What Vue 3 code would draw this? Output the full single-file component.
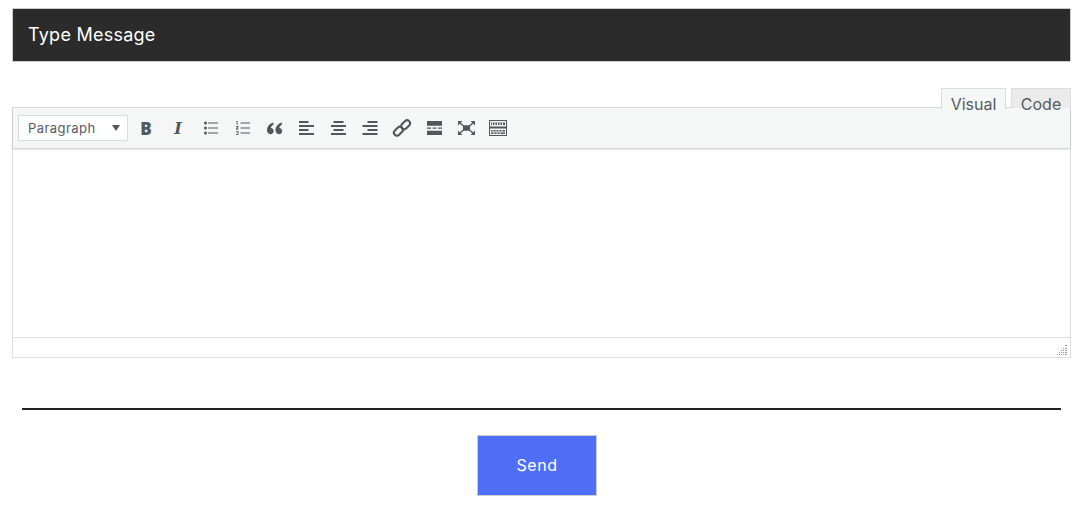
<script setup>
const tabs = [
  { label: "Visual", active: true },
  { label: "Code", active: false },
];
</script>

<template>
  <div class="page">
    <div class="title-bar"><span>Type Message</span></div>

    <div class="tabs">
      <div v-for="tab in tabs" :key="tab.label" class="tab" :class="{ active: tab.active }">{{ tab.label }}</div>
    </div>

    <div class="editor">
      <div class="toolbar">
        <div class="format">
          <span>Paragraph</span>
          <i class="caret"></i>
        </div>
        <div class="tools">
          <!-- bold -->
          <div class="tool"><span class="bold">B</span></div>
          <!-- italic -->
          <div class="tool"><span class="italic">I</span></div>
          <!-- bullet list -->
          <div class="tool">
            <svg viewBox="0 0 20 20">
              <circle cx="5.500" cy="5" r="1.500" /><circle cx="5.500" cy="10" r="1.500" /><circle cx="5.500" cy="15" r="1.500" />
              <path d="M8 4.500h10v1H8zM8 9.500h10v1H8zM8 14.500h10v1H8z" />
            </svg>
          </div>
          <!-- numbered list -->
          <div class="tool">
            <svg viewBox="0 0 20 20">
              <path d="M8.500 4.500H18v1H8.500zM8.500 9.500H18v1H8.500zM8.500 14.500H18v1H8.500z" />
              <path d="M4.300 3h1.200v3.700H4.600V3.800H4.300zM4 8h2.500v.9L5.200 10.600h1.300v.8H4v-.8L5.500 8.800H4zM4 13h2.500v3.800H4V16h1.700v-.7H4.500v-.6h1.200V13.800H4z" />
            </svg>
          </div>
          <!-- blockquote -->
          <div class="tool">
            <svg viewBox="0 0 20 20">
              <path d="M9.500 4.500C5.500 5.500 3 8.500 3 12.300c0 2.300 1.400 3.900 3.400 3.900 1.900 0 3.300-1.400 3.300-3.200 0-1.700-1.200-3-2.800-3.100.2-1.400 1.200-2.500 2.600-3.300zM18 4.500c-4 1-6.500 4-6.500 7.800 0 2.300 1.400 3.900 3.400 3.900 1.900 0 3.300-1.400 3.300-3.200 0-1.700-1.200-3-2.800-3.100.2-1.400 1.200-2.500 2.600-3.300z" />
            </svg>
          </div>
          <!-- align left -->
          <div class="tool">
            <svg viewBox="0 0 20 20"><path d="M3 3h9.500v2H3zM3 7h15v2H3zM3 11h9.500v2H3zM3 15h15v2H3z" /></svg>
          </div>
          <!-- align center -->
          <div class="tool">
            <svg viewBox="0 0 20 20"><path d="M5.500 3h10v2h-10zM3 7h15v2H3zM5.500 11h10v2h-10zM3 15h15v2H3z" /></svg>
          </div>
          <!-- align right -->
          <div class="tool">
            <svg viewBox="0 0 20 20"><path d="M7.500 3H17.500v2H7.500zM2.500 7h15v2h-15zM7.500 11H17.500v2H7.500zM2.500 15h15v2h-15z" /></svg>
          </div>
          <!-- link -->
          <div class="tool">
            <svg class="link" viewBox="0 0 20 20">
              <rect x="8.600" y="3.700" width="10" height="6" rx="3" transform="rotate(-45 13.600 6.700)" />
              <rect x="1.400" y="10.300" width="10" height="6" rx="3" transform="rotate(-45 6.400 13.300)" />
            </svg>
          </div>
          <!-- read more -->
          <div class="tool">
            <svg viewBox="0 0 20 20"><path d="M3 3h15v4.700H3zM3 9.500h4v1.300H3zM8.500 9.500h4v1.300h-4zM14 9.500h4v1.300h-4zM3 12.700h15V17H3z" /></svg>
          </div>
          <!-- fullscreen -->
          <div class="tool">
            <svg viewBox="0 0 20 20">
              <path d="M7 7.300h7v5.400H7z" />
              <path d="M2 3h4.500L2 7.500zM19 3h-4.500L19 7.500zM2 17h4.500L2 12.500zM19 17h-4.500l4.500-4.500z" />
              <path d="M3.500 4.500l4 3.500M17.500 4.500l-4 3.500M3.500 15.500l4-3.500M17.500 15.500l-4-3.500" stroke="#50575e" stroke-width="1.300" />
            </svg>
          </div>
          <!-- toolbar toggle -->
          <div class="tool">
            <svg viewBox="0 0 20 20">
              <path fill-rule="evenodd" d="M1 2h18v16H1zM2 3v5.500h16V3zM2 10.500V17h16v-6.500z" />
              <path d="M3 4.500h14v2.500H3zM3 12h14v1.500H3zM3 14.500h14V16H3z" />
              <path d="M4.500 4.500V7M7 4.500V7M9.500 4.500V7M12 4.500V7M14.500 4.500V7M5 12v1.500M8 12v1.500M11 12v1.500M14 12v1.500M6 14.500V16M9 14.500V16M12 14.500V16" stroke="#f5f6f6" stroke-width="1" />
            </svg>
          </div>
        </div>
      </div>

      <div class="content"></div>

      <div class="status">
        <svg class="grip" width="10" height="10" viewBox="0 0 10 10">
          <path d="M8 0h2v1H8zM6 3h1v1H6zM8 3h2v1H8zM4 5h1v1H4zM6 5h1v1H6zM8 5h2v1H8zM2 7h1v1H2zM4 7h1v1H4zM6 7h1v1H6zM8 7h2v1H8zM0 9h1v1H0zM2 9h1v1H2zM4 9h1v1H4zM6 9h1v1H6zM8 9h2v1H8z" />
        </svg>
      </div>
    </div>

    <hr class="rule" />

    <div class="actions">
      <button type="button" class="send">Send</button>
    </div>
  </div>
</template>

<style>
html,
body {
  background: #fff;
}
</style>

<style scoped>
.page {
  padding: 8px 15px 0 12px;
  font-family: "Inter", "Open Sans", sans-serif;
}
.title-bar {
  height: 54px;
  box-sizing: border-box;
  display: flex;
  align-items: center;
  padding: 0 0 2px 15px;
  background: #2b2b2b;
  border: 1px solid #ccc;
  color: #fff;
  font-size: 18px;
  letter-spacing: 0.25px;
}
.tabs {
  display: flex;
  justify-content: flex-end;
  gap: 5px;
  margin-top: 26px;
  height: 20px;
  position: relative;
  z-index: 1;
}
.tab {
  width: 60px;
  height: 20px;
  box-sizing: border-box;
  padding-top: 5px;
  text-align: center;
  border: 1px solid #ddd;
  border-bottom: 0;
  background: #ebebeb;
  color: #555c63;
  font-size: 16px;
  line-height: 20px;
  white-space: nowrap;
}
.tab.active {
  width: 65px;
  height: 21px;
  background: #f6f7f7;
}
.editor {
  margin-top: -1px;
  height: 251px;
  box-sizing: border-box;
  border: 1px solid #ddd;
  display: flex;
  flex-direction: column;
}
.toolbar {
  height: 40px;
  box-sizing: border-box;
  background: #f5f6f6;
  box-shadow: 0 1px 2px rgba(0, 0, 0, 0.25);
  display: flex;
  align-items: center;
  padding-left: 5px;
  position: relative;
}
.format {
  width: 110px;
  height: 26px;
  box-sizing: border-box;
  display: flex;
  align-items: center;
  justify-content: space-between;
  padding: 0 7px 0 9px;
  background: #fff;
  border: 1px solid #ddd;
  color: #555c63;
  font-size: 13px;
  letter-spacing: 0.45px;
}
.caret {
  width: 0;
  height: 0;
  border-left: 4px solid transparent;
  border-right: 4px solid transparent;
  border-top: 6px solid #50575e;
}
.tools {
  display: flex;
  margin-left: 2px;
}
.tool {
  width: 32px;
  height: 26px;
  display: flex;
  align-items: center;
  justify-content: center;
  color: #50575e;
}
.tool svg {
  width: 20px;
  height: 20px;
  fill: #50575e;
}
.tool svg.link {
  fill: none;
  stroke: #50575e;
  stroke-width: 2.100;
}
.bold {
  font-family: "Open Sans", sans-serif;
  font-weight: 800;
  font-size: 17px;
}
.italic {
  font-family: "DejaVu Serif", serif;
  font-style: italic;
  font-weight: 700;
  font-size: 16px;
}
.content {
  flex: 1;
  background: #fff;
}
.status {
  height: 20px;
  box-sizing: border-box;
  border-top: 1px solid #ddd;
  display: flex;
  justify-content: flex-end;
  align-items: flex-end;
  padding: 0 3px 2px 0;
}
.grip {
  fill: #999;
}
.rule {
  margin: 50px 10px 0;
  height: 2px;
  border: 0;
  background: #222;
}
.actions {
  display: flex;
  justify-content: center;
  margin-top: 25px;
  padding-right: 9px;
}
.send {
  width: 120px;
  height: 61px;
  background: #4f6ef7;
  border: 1px solid #ccc;
  color: #fff;
  font-family: inherit;
  font-size: 16px;
  letter-spacing: 0.5px;
  padding: 0 0 1px;
}
</style>
